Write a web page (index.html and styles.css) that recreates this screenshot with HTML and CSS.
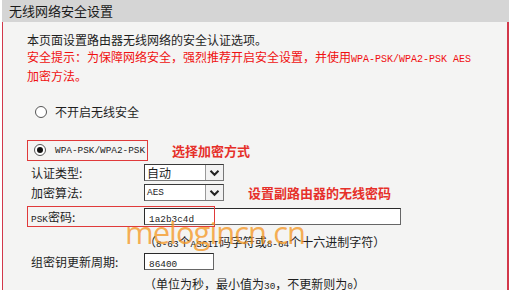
FILE: index.html
```html
<!DOCTYPE html>
<html lang="zh-CN">
<head>
<meta charset="utf-8">
<link rel="stylesheet" href="styles.css">
</head>
<body>
<div class="page">
  <div class="title">无线网络安全设置</div>
  <div class="panel">
    <div class="intro">
      <div>本页面设置路由器无线网络的安全认证选项。</div>
      <div class="warn">安全提示：为保障网络安全，强烈推荐开启安全设置，并使用<span class="mono">WPA-PSK/WPA2-PSK AES</span></div>
      <div class="warn">加密方法。</div>
    </div>
    <div class="radio-row first">
      <span class="radio"></span><span>不开启无线安全</span>
    </div>
    <div class="radio-row second">
      <div class="mark-box">
        <span class="radio checked"></span><span class="mono small">WPA-PSK/WPA2-PSK</span>
      </div>
      <span class="note">选择加密方式</span>
    </div>
    <div class="form">
      <div class="row">
        <span class="label">认证类型:</span>
        <div class="select"><span class="sel-text">自动</span><span class="sel-btn"><svg width="11" height="8" viewBox="0 0 11 8"><path d="M1.5 1.8 L5.5 5.8 L9.5 1.8" fill="none" stroke="#222" stroke-width="2"/></svg></span></div>
      </div>
      <div class="row">
        <span class="label">加密算法:</span>
        <div class="select"><span class="sel-text mono small">AES</span><span class="sel-btn"><svg width="11" height="8" viewBox="0 0 11 8"><path d="M1.5 1.8 L5.5 5.8 L9.5 1.8" fill="none" stroke="#222" stroke-width="2"/></svg></span></div>
        <span class="note note2">设置副路由器的无线密码</span>
      </div>
      <div class="row psk">
        <span class="label"><span class="mono small">PSK</span>密码:</span>
        <div class="input wide"><span class="mono small">1a2b3c4d</span></div>
        <div class="psk-box"></div>
      </div>
      <div class="hint hint1">（<span class="mono small">8-63</span>个<span class="mono small">ASCII</span>码字符或<span class="mono small">8-64</span>个十六进制字符）</div>
      <div class="row r4">
        <span class="label">组密钥更新周期:</span>
        <div class="input short"><span class="mono small">86400</span></div>
      </div>
      <div class="hint hint2">（单位为秒，最小值为<span class="mono small">30</span>，不更新则为<span class="mono small">0</span>）</div>
      <div class="watermark">melogincn.cn</div>
    </div>
  </div>
</div>
</body>
</html>
```

FILE: styles.css
```css
* { box-sizing: border-box; }
html, body { margin: 0; padding: 0; background: #ffffff; }
body {
  font-family: "Noto Sans CJK SC", "Liberation Sans", sans-serif;
  font-size: 12px;
  color: #1e1e1e;
}
.page { width: 509px; }
.title {
  height: 22px;
  line-height: 22px;
  background: #d5d5d5;
  padding-left: 7px;
  font-size: 13px;
  color: #1a1a1a;
  margin-left: 2px;
}
.panel {
  margin-left: 2px;
  width: 507px;
  height: 268px;
  background: #f4f4f3;
  border-left: 1px solid #d2384a;
  border-right: 2px solid #d2384a;
  padding: 10px 0 0 24px;
}
.intro { line-height: 16.5px; }
.warn { color: #f01010; }
.mono { font-family: "Liberation Mono", "DejaVu Sans Mono", monospace; font-size: 10px; }
.mono.small { font-size: 9.4px; }
.radio-row { display: flex; align-items: center; height: 20px; }
.radio-row.first { margin-top: 17px; padding-left: 8px; gap: 8px; }
.radio-row.second { margin-top: 18px; height: 21px; }
.radio {
  width: 12px; height: 12px;
  border: 1px solid #555;
  border-radius: 50%;
  background: #fff;
  position: relative;
  display: inline-block;
}
.radio.checked::after {
  content: "";
  position: absolute;
  left: 2px; top: 2px;
  width: 6px; height: 6px;
  border-radius: 50%;
  background: #111;
}
.mark-box {
  display: flex; align-items: center; gap: 9px;
  height: 21px;
  width: 121px;
  border: 1.5px solid #e03a3a;
  padding-left: 6px;
}
.note {
  color: #e6302a;
  font-weight: bold;
  font-size: 13px;
  margin-left: 24px;
}
.form { position: relative; margin-top: 2px; }
.row { display: flex; align-items: center; height: 20px; position: relative; }
.label { width: 117px; padding-left: 4px; }
.select {
  width: 80px; height: 17px;
  border: 1px solid #3a3a3a;
  border-right-color: #777;
  border-bottom-color: #777;
  background: #fff;
  display: flex;
}
.sel-text { flex: 1; padding-left: 2px; line-height: 15px; }
.sel-btn {
  width: 18px;
  border-left: 1px solid #999;
  background: #f2f2f2;
  display: flex; align-items: center; justify-content: center;
}
.note2 { margin-left: 24px; }
.row.psk { margin-top: 3px; height: 21px; }
.input {
  height: 17px;
  border: 1px solid #2a2a2a;
  border-right-color: #666;
  border-bottom-color: #666;
  background: #fff;
  padding-left: 4px;
  line-height: 15px;
}
.input.wide { width: 257px; }
.input.short { width: 70px; }
.psk-box {
  position: absolute;
  left: 0; top: 0;
  width: 188px; height: 21px;
  border: 1.5px solid #e03a3a;
}
.hint { padding-left: 117px; height: 16px; line-height: 16px; }
.hint1 { margin-top: 7px; }
.r4 { margin-top: 2px; }
.hint2 { margin-top: 4px; }
.watermark {
  position: absolute;
  left: 98px;
  top: 52px;
  font-family: "Open Sans", "DejaVu Sans", sans-serif;
  font-weight: 400;
  font-size: 31px;
  line-height: 34px;
  letter-spacing: -1px;
  color: rgba(244, 150, 30, 0.75);
}
```
